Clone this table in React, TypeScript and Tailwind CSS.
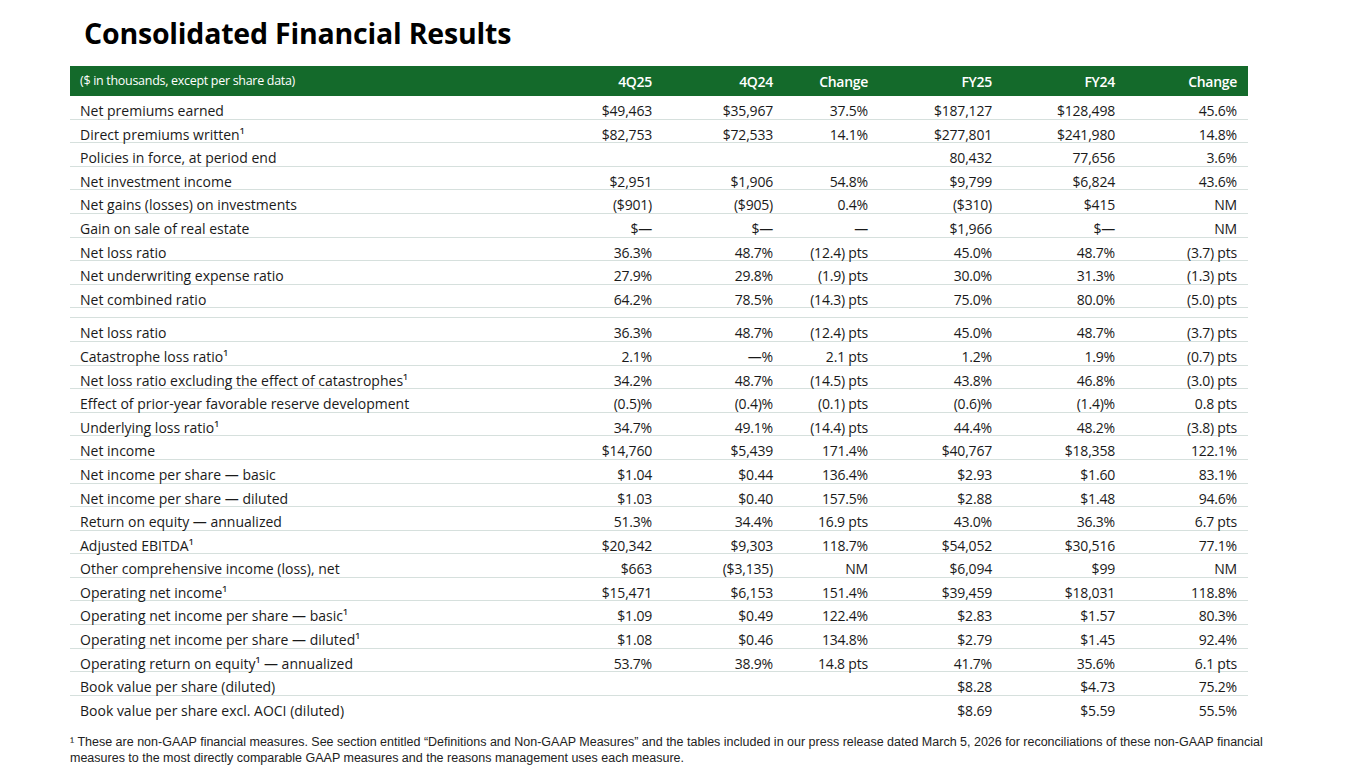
import React from "react";

type Row = [string, string, string, string, string, string, string];

const group1: Row[] = [
  ["Net premiums earned", "$49,463", "$35,967", "37.5%", "$187,127", "$128,498", "45.6%"],
  ["Direct premiums written¹", "$82,753", "$72,533", "14.1%", "$277,801", "$241,980", "14.8%"],
  ["Policies in force, at period end", "", "", "", "80,432", "77,656", "3.6%"],
  ["Net investment income", "$2,951", "$1,906", "54.8%", "$9,799", "$6,824", "43.6%"],
  ["Net gains (losses) on investments", "($901)", "($905)", "0.4%", "($310)", "$415", "NM"],
  ["Gain on sale of real estate", "$—", "$—", "—", "$1,966", "$—", "NM"],
  ["Net loss ratio", "36.3%", "48.7%", "(12.4) pts", "45.0%", "48.7%", "(3.7) pts"],
  ["Net underwriting expense ratio", "27.9%", "29.8%", "(1.9) pts", "30.0%", "31.3%", "(1.3) pts"],
  ["Net combined ratio", "64.2%", "78.5%", "(14.3) pts", "75.0%", "80.0%", "(5.0) pts"],
];

const group2: Row[] = [
  ["Net loss ratio", "36.3%", "48.7%", "(12.4) pts", "45.0%", "48.7%", "(3.7) pts"],
  ["Catastrophe loss ratio¹", "2.1%", "—%", "2.1 pts", "1.2%", "1.9%", "(0.7) pts"],
  ["Net loss ratio excluding the effect of catastrophes¹", "34.2%", "48.7%", "(14.5) pts", "43.8%", "46.8%", "(3.0) pts"],
  ["Effect of prior-year favorable reserve development", "(0.5)%", "(0.4)%", "(0.1) pts", "(0.6)%", "(1.4)%", "0.8 pts"],
  ["Underlying loss ratio¹", "34.7%", "49.1%", "(14.4) pts", "44.4%", "48.2%", "(3.8) pts"],
  ["Net income", "$14,760", "$5,439", "171.4%", "$40,767", "$18,358", "122.1%"],
  ["Net income per share — basic", "$1.04", "$0.44", "136.4%", "$2.93", "$1.60", "83.1%"],
  ["Net income per share — diluted", "$1.03", "$0.40", "157.5%", "$2.88", "$1.48", "94.6%"],
  ["Return on equity — annualized", "51.3%", "34.4%", "16.9 pts", "43.0%", "36.3%", "6.7 pts"],
  ["Adjusted EBITDA¹", "$20,342", "$9,303", "118.7%", "$54,052", "$30,516", "77.1%"],
  ["Other comprehensive income (loss), net", "$663", "($3,135)", "NM", "$6,094", "$99", "NM"],
  ["Operating net income¹", "$15,471", "$6,153", "151.4%", "$39,459", "$18,031", "118.8%"],
  ["Operating net income per share — basic¹", "$1.09", "$0.49", "122.4%", "$2.83", "$1.57", "80.3%"],
  ["Operating net income per share — diluted¹", "$1.08", "$0.46", "134.8%", "$2.79", "$1.45", "92.4%"],
  ["Operating return on equity¹ — annualized", "53.7%", "38.9%", "14.8 pts", "41.7%", "35.6%", "6.1 pts"],
  ["Book value per share (diluted)", "", "", "", "$8.28", "$4.73", "75.2%"],
  ["Book value per share excl. AOCI (diluted)", "", "", "", "$8.69", "$5.59", "55.5%"],
];

const cols = "grid grid-cols-[472px_121px_121px_95px_124px_123px_122px]";

function DataRow({ r, last }: { r: Row; last?: boolean }) {
  return (
    <div
      className={`${cols} h-[23.6px] items-center pt-[4px] ${
        last ? "" : "border-b border-[#d6e0dd]"
      }`}
    >
      <div className="pl-[10px] whitespace-nowrap">{r[0]}</div>
      {r.slice(1).map((v, i) => (
        <div key={i} className="pr-[11px] text-right whitespace-nowrap tracking-[-0.2px]">
          {v}
        </div>
      ))}
    </div>
  );
}

export default function App() {
  return (
    <div className="w-[1365px] h-[768px] bg-white overflow-hidden text-[#1a1a1a] font-['Open_Sans',sans-serif]">
      <div className="pl-[84px] pt-[14px] h-[66px]">
        <h1 className="text-[28.5px] font-bold leading-[38px] tracking-[-0.2px] text-black">
          Consolidated Financial Results
        </h1>
      </div>
      <div className="ml-[70px] w-[1178px] text-[14px]">
        <div className={`${cols} h-[30px] items-center bg-[#146a2b] text-white`}>
          <div className="pl-[10px] text-[12.5px] tracking-[-0.3px]">($ in thousands, except per share data)</div>
          {["4Q25", "4Q24", "Change", "FY25", "FY24", "Change"].map((h, i) => (
            <div key={i} className="pr-[11px] text-right font-semibold tracking-[-0.3px]">
              {h}
            </div>
          ))}
        </div>
        {group1.map((r, i) => (
          <DataRow key={i} r={r} />
        ))}
        <div className="h-[10px] border-b border-[#d6e0dd]" />
        {group2.map((r, i) => (
          <DataRow key={i} r={r} last={i === group2.length - 1} />
        ))}
      </div>
      <div className="ml-[70px] mt-[15px] w-[1220px] text-[12.5px] leading-[16px] text-[#222] font-['Liberation_Sans',Arial,sans-serif]">
        ¹ These are non-GAAP financial measures. See section entitled “Definitions and Non-GAAP Measures” and the tables included in our press release dated March 5, 2026 for reconciliations of these non-GAAP financial measures to the most directly comparable GAAP measures and the reasons management uses each measure.
      </div>
    </div>
  );
}
